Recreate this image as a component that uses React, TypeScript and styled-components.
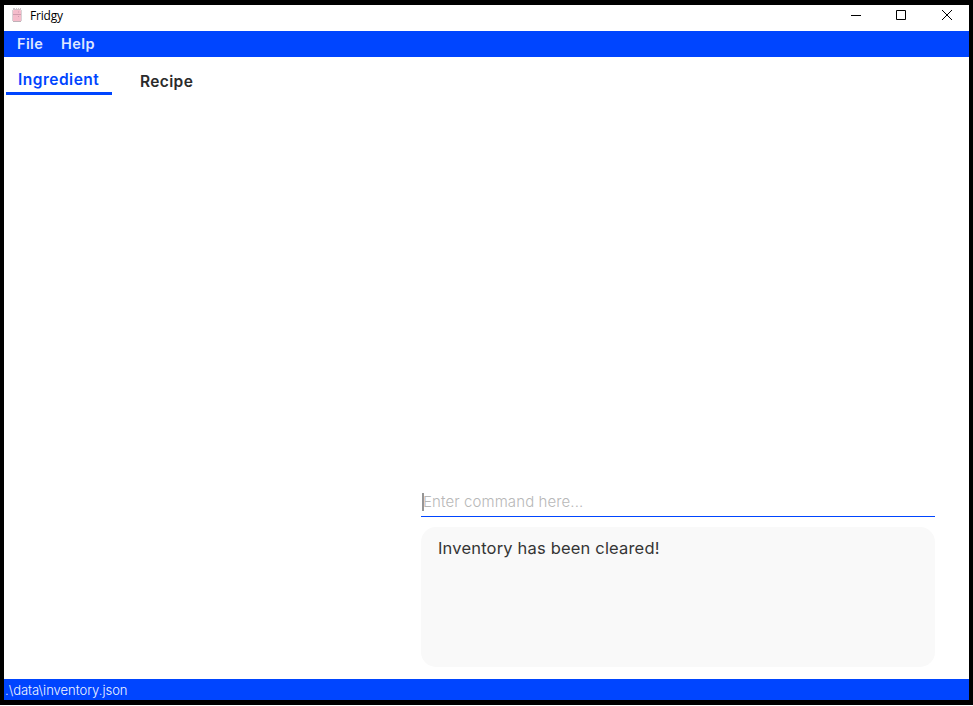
import React from "react";
import styled, { createGlobalStyle } from "styled-components";

const BLUE = "#0045ff";

const GlobalStyle = createGlobalStyle`
  *, *::before, *::after { box-sizing: border-box; }
  html, body { margin: 0; padding: 0; background: #fff; overflow: hidden; }
  body { font-family: Inter, "Open Sans", sans-serif; }
`;

const Frame = styled.div`
  width: 973px;
  height: 705px;
  padding: 5px 4px;
  background: #000;
`;

const Window = styled.main`
  display: flex;
  flex-direction: column;
  width: 965px;
  height: 695px;
  background: #fff;
`;

const TitleBar = styled.header`
  display: flex;
  flex: 0 0 26px;
  height: 26px;
  padding-left: 8px;
`;

const Title = styled.h1`
  flex: 1;
  margin: 0 0 0 8px;
  font: 400 12px/22px "Open Sans", sans-serif;
  letter-spacing: -0.2px;
  color: #000;
`;

const AppIcon = styled.svg`
  display: block;
  width: 10px;
  height: 16px;
  margin-top: 2px;
`;

const WindowControls = styled.div`
  display: flex;
`;

const ControlButton = styled.button`
  display: flex;
  justify-content: flex-start;
  width: 46px;
  height: 22px;
  padding: 5px 0 0 19px;
  border: 0;
  background: transparent;
`;

const ControlGlyph = styled.svg`
  display: block;
  flex: none;
  width: 11px;
  height: 11px;
  fill: none;
  stroke: #000;
`;

const MenuBar = styled.nav`
  display: flex;
  flex: 0 0 26px;
  gap: 18px;
  padding-left: 13px;
  background: ${BLUE};
`;

const MenuItem = styled.button<{ $width: number }>`
  width: ${({ $width }) => $width}px;
  padding: 0;
  border: 0;
  background: transparent;
  text-align: left;
  white-space: nowrap;
  font: 600 14.5px/26px Inter, sans-serif;
  letter-spacing: 0.4px;
  color: #dfe7ff;
`;

const TabList = styled.div`
  display: flex;
  flex: 0 0 38px;
  gap: 16px;
  padding-left: 2px;
`;

const Tab = styled.button<{ $active?: boolean }>`
  display: flex;
  align-items: flex-start;
  width: ${({ $active }) => ($active ? 106 : 78)}px;
  height: 38px;
  padding: ${({ $active }) => ($active ? "11px 0 0 12px" : "13px 0 0 12px")};
  border: 0;
  border-bottom: 3px solid ${({ $active }) => ($active ? BLUE : "transparent")};
  background: transparent;
  text-align: left;
  white-space: nowrap;
  font: 600 15.5px/24px Inter, sans-serif;
  letter-spacing: ${({ $active }) => ($active ? 0.5 : 0.36)}px;
  color: ${({ $active }) => ($active ? BLUE : "#2b2b2b")};
`;

const TabLabel = styled.span`
  display: block;
  height: 24px;
`;

const Workspace = styled.section`
  display: flex;
  flex: 1;
  flex-direction: column;
  justify-content: flex-end;
  align-items: flex-end;
  gap: 10px;
  padding: 0 34px 12px 0;
`;

const CommandBox = styled.div`
  display: flex;
  width: 514px;
  height: 27px;
  padding: 3px 0 0 1px;
  border-bottom: 1px solid ${BLUE};
`;

const Caret = styled.span`
  width: 2px;
  height: 18px;
  background: #969696;
`;

const Placeholder = styled.span`
  margin-left: -1px;
  font: 300 15px/18px Inter, sans-serif;
  letter-spacing: 0.1px;
  color: #b8b8b8;
`;

const ResultBox = styled.output`
  display: block;
  width: 514px;
  height: 140px;
  padding: 9px 17px;
  border-radius: 15px;
  background: #f9f9f9;
  font: 400 16.5px/24px Inter, sans-serif;
  letter-spacing: 0.18px;
  color: #353535;
`;

const StatusBar = styled.footer`
  flex: 0 0 21px;
  height: 21px;
  padding-left: 1px;
  background: ${BLUE};
  font: 300 13px/23px Inter, sans-serif;
  color: #f2f5ff;
`;

export default function App() {
  return (
    <>
      <GlobalStyle />
      <Frame>
        <Window>
          <TitleBar>
            <AppIcon viewBox="0 0 10 16">
              <path d="M1 1.5h2M4 1.5h1M6 1.5h1M8 1.5h1M1 2.5h8" stroke="#cfc6ca" fill="none" />
              <rect x="1" y="3" width="8" height="12" rx="1" fill="#f5bccb" />
              <path d="M.5 3v11M9.5 3v11" stroke="#d9d2d5" fill="none" />
              <path d="M1 7.5h8M6.5 4.5v1M6.5 9v1" stroke="#cf9cae" fill="none" />
              <path d="M1 14.5h8" stroke="#bfb2b8" />
            </AppIcon>
            <Title>Fridgy</Title>
            <WindowControls>
              <ControlButton aria-label="Minimize">
                <ControlGlyph viewBox="0 0 11 11"><path d="M1 5.5h10" /></ControlGlyph>
              </ControlButton>
              <ControlButton aria-label="Maximize">
                <ControlGlyph viewBox="0 0 11 11"><path d="M.5.5h9v9h-9z" /></ControlGlyph>
              </ControlButton>
              <ControlButton aria-label="Close">
                <ControlGlyph viewBox="0 0 11 11"><path d="m0 0 10 10m0-10-10 10" /></ControlGlyph>
              </ControlButton>
            </WindowControls>
          </TitleBar>
          <MenuBar>
            <MenuItem $width={26}>File</MenuItem>
            <MenuItem $width={34}>Help</MenuItem>
          </MenuBar>
          <TabList role="tablist">
            <Tab role="tab" $active><TabLabel>Ingredient</TabLabel></Tab>
            <Tab role="tab"><TabLabel>Recipe</TabLabel></Tab>
          </TabList>
          <Workspace>
            <CommandBox>
              <Caret />
              <Placeholder>Enter command here...</Placeholder>
            </CommandBox>
            <ResultBox>Inventory has been cleared!</ResultBox>
          </Workspace>
          <StatusBar>.\data\inventory.json</StatusBar>
        </Window>
      </Frame>
    </>
  );
}
